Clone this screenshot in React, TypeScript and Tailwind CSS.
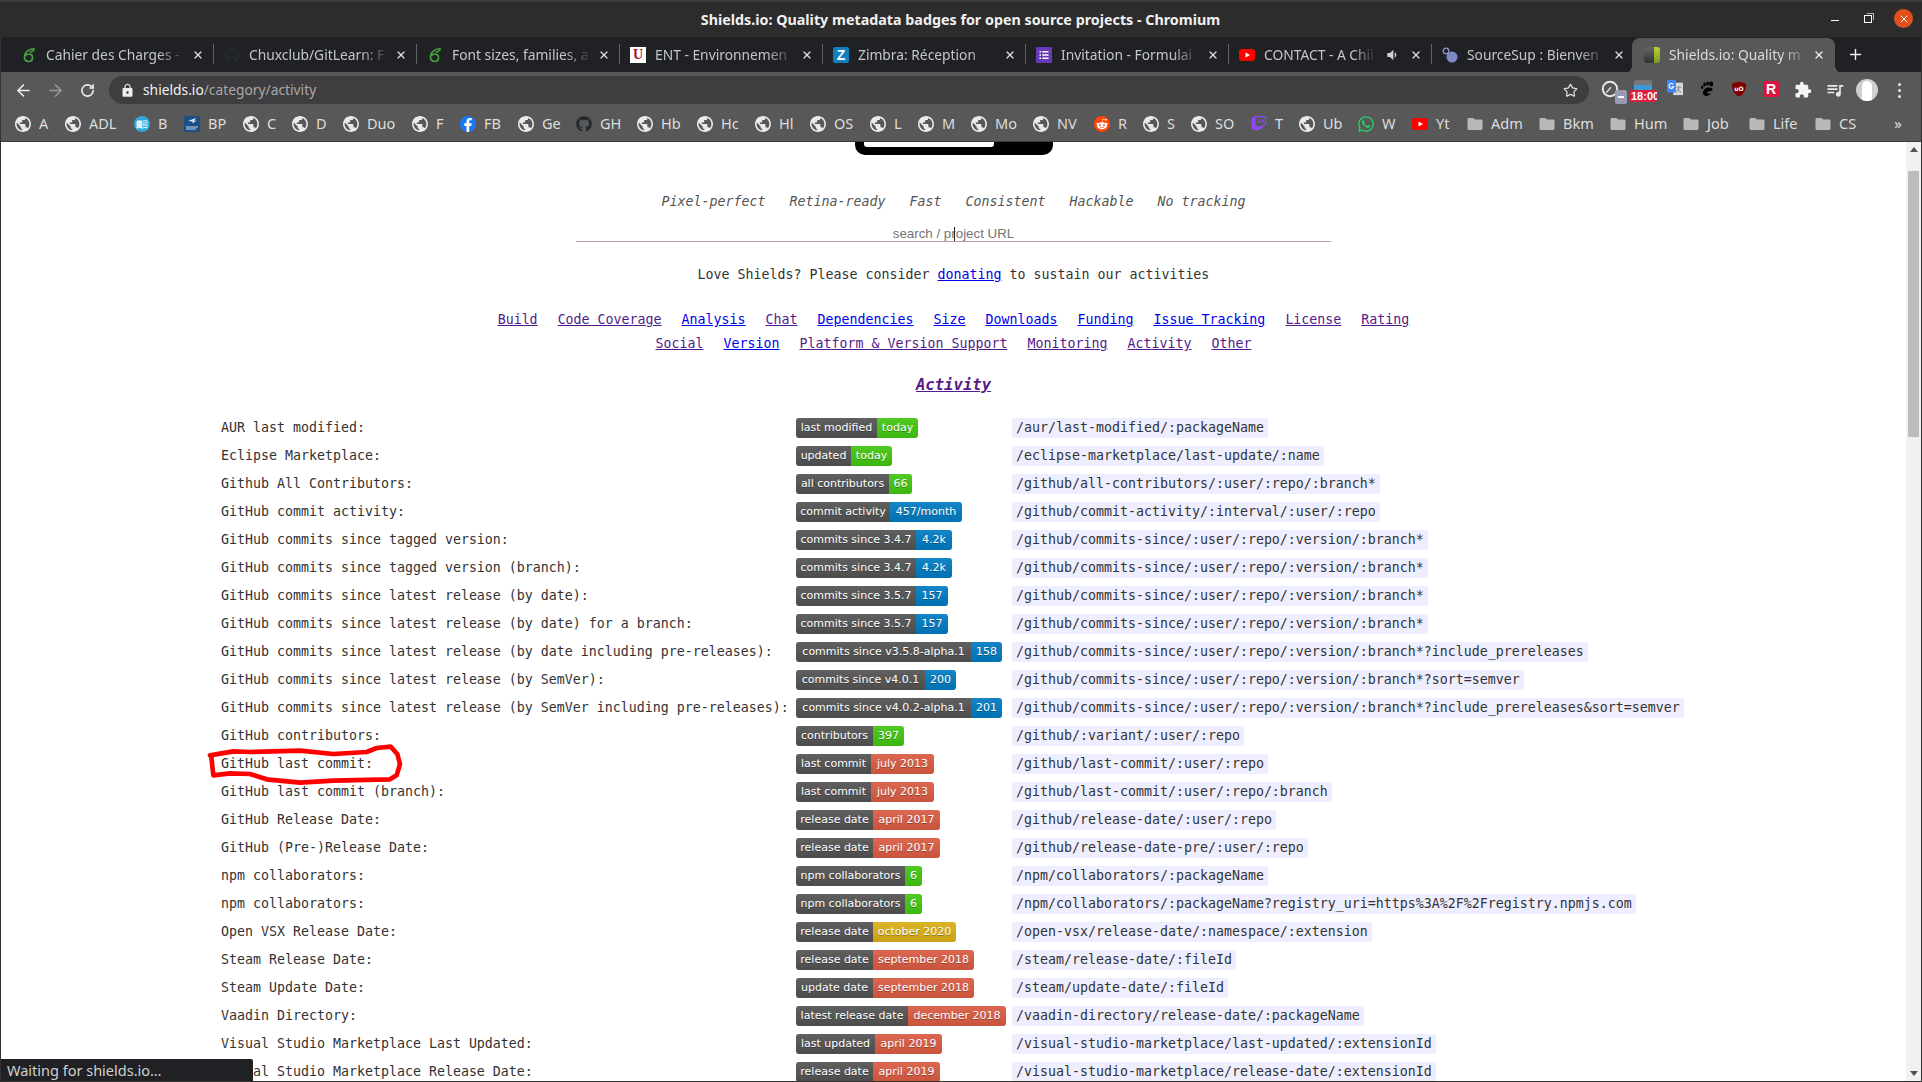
import React from 'react';
import { ArrowLeft, ArrowRight, RotateCw, Plus, X, Star } from 'lucide-react';
import { FaGithub, FaWhatsapp, FaTwitch, FaRedditAlien, FaFacebookF } from 'react-icons/fa';
import { MdLock, MdFolder, MdExtension, MdQueueMusic, MdVolumeDown, MdMenuBook } from 'react-icons/md';

const Globe = () => (
  <svg viewBox="2 2 20 20" className="w-4 h-4 shrink-0" fill="#e8eaed">
    <path d="M12 2C6.48 2 2 6.48 2 12s4.48 10 10 10 10-4.48 10-10S17.52 2 12 2zm-1 17.93c-3.95-.49-7-3.85-7-7.93 0-.62.08-1.21.21-1.79L9 15v1c0 1.1.9 2 2 2v1.93zm6.9-2.54c-.26-.81-1-1.39-1.9-1.39h-1v-3c0-.55-.45-1-1-1H8v-2h2c.55 0 1-.45 1-1V7h2c1.1 0 2-.9 2-2v-.41c2.93 1.19 5 4.06 5 7.41 0 2.08-.8 3.97-2.1 5.39z" />
  </svg>
);

const Overleaf = () => (
  <svg viewBox="0 0 16 16" className="w-4 h-4 shrink-0" fill="none" stroke="#47a141" strokeWidth="1.7">
    <path d="M13.5 1.5C9 2 4 4.500 3.500 9.500c-.3 3 1.500 5 4 5s4-1.800 4-4-1.800-3.500-3.700-3.500c-1.500 0-2.800.8-3.500 2" />
    <path d="M13.5 1.500c-.5 2-2 3.500-5 3.500" strokeWidth="1.300" />
  </svg>
);

const Ent = () => (
  <div className="w-4 h-4 shrink-0 bg-white flex items-center justify-center text-[#a3142a] text-[14px] font-bold leading-none [font-family:'Liberation_Serif',serif]">
    U
  </div>
);

const Zimbra = () => (
  <div className="w-4 h-4 shrink-0 rounded-[2px] bg-[#0f7fc0] flex items-center justify-center text-white text-[14px] font-bold leading-none [font-family:'Liberation_Sans',sans-serif]">
    Z
  </div>
);

const Forms = () => (
  <svg viewBox="0 0 16 16" className="w-4 h-4 shrink-0">
    <rect width="16" height="16" rx="1" fill="#673ab7" />
    <path d="M3.500 4h1.500v1.500H3.500zM3.500 7.300h1.500v1.500H3.500zM3.500 10.500h1.500V12H3.500zM6.300 4h6.200v1.500H6.300zM6.300 7.300h6.200v1.500H6.300zM6.300 10.500h6.200V12H6.300z" fill="#fff" />
  </svg>
);

const Youtube = () => (
  <svg viewBox="0 0 16 16" className="w-4 h-4 shrink-0">
    <rect y="2" width="16" height="12" rx="3" fill="#f00" />
    <path d="M6.500 5.500v5L11 8z" fill="#fff" />
  </svg>
);

const SourceSup = () => (
  <svg viewBox="0 0 16 16" className="w-4 h-4 shrink-0">
    <circle cx="4" cy="4" r="2.800" fill="none" stroke="#8e97cf" strokeWidth="1.300" />
    <circle cx="10" cy="10" r="5.500" fill="#8088c8" />
  </svg>
);

const ShieldsIcon = () => (
  <div className="w-4 h-4 shrink-0 rounded-[3px] flex overflow-hidden">
    <div className="w-[10px] bg-gradient-to-b from-[#666] to-[#333]" />
    <div className="flex-1 bg-gradient-to-b from-[#b5d334] to-[#7d9b1c]" />
  </div>
);

const GithubDark = () => <FaGithub className="w-4 h-4 shrink-0 text-[#24292e]" />;
const Folder = () => <MdFolder className="w-[18px] h-[18px] shrink-0 -mx-[1px] text-[#b9b9b9]" />;

const BookIcon = () => (
  <div className="w-4 h-4 shrink-0 rounded-full bg-[#30a8dc] flex items-center justify-center">
    <MdMenuBook className="w-3 h-3 text-[#d9f1fb]" />
  </div>
);

const BanquePostale = () => (
  <svg viewBox="0 0 16 16" className="w-4 h-4 shrink-0">
    <rect width="16" height="16" fill="#1b4f86" />
    <path d="M4 5l8-3-2 3 3-.5-5 3 1-2z" fill="#e8eef5" />
    <path d="M2 11h12M2 13h10" stroke="#c9d6e5" strokeWidth="1" />
  </svg>
);

const FacebookIcon = () => (
  <div className="w-4 h-4 shrink-0 rounded-full bg-[#1877f2] flex items-end justify-center overflow-hidden">
    <FaFacebookF className="w-3 h-[14px] text-white" />
  </div>
);

const RedditIcon = () => (
  <div className="w-4 h-4 shrink-0 rounded-full bg-[#ff4500] flex items-center justify-center">
    <FaRedditAlien className="w-3 h-3 text-white" />
  </div>
);

const bookmarks: { t: string; w: number; icon?: React.ReactNode }[] = [
  { t: 'A', w: 50 },
  { t: 'ADL', w: 69 },
  { t: 'B', w: 50, icon: <BookIcon /> },
  { t: 'BP', w: 59, icon: <BanquePostale /> },
  { t: 'C', w: 49 },
  { t: 'D', w: 51 },
  { t: 'Duo', w: 69 },
  { t: 'F', w: 48 },
  { t: 'FB', w: 58, icon: <FacebookIcon /> },
  { t: 'Ge', w: 58 },
  { t: 'GH', w: 61, icon: <GithubDark /> },
  { t: 'Hb', w: 60 },
  { t: 'Hc', w: 58 },
  { t: 'Hl', w: 55 },
  { t: 'OS', w: 60 },
  { t: 'L', w: 48 },
  { t: 'M', w: 53 },
  { t: 'Mo', w: 62 },
  { t: 'NV', w: 61 },
  { t: 'R', w: 49, icon: <RedditIcon /> },
  { t: 'S', w: 48 },
  { t: 'SO', w: 60 },
  { t: 'T', w: 48, icon: <FaTwitch className="w-4 h-4 shrink-0 text-[#9146ff]" /> },
  { t: 'Ub', w: 59 },
  { t: 'W', w: 54, icon: <FaWhatsapp className="w-[18px] h-[18px] -mx-[1px] shrink-0 text-[#25d366]" /> },
  { t: 'Yt', w: 55, icon: <Youtube /> },
  { t: 'Adm', w: 72, icon: <Folder /> },
  { t: 'Bkm', w: 71, icon: <Folder /> },
  { t: 'Hum', w: 73, icon: <Folder /> },
  { t: 'Job', w: 66, icon: <Folder /> },
  { t: 'Life', w: 66, icon: <Folder /> },
  { t: 'CS', w: 50, icon: <Folder /> },
];

const tabs: { t: string; icon: React.ReactNode; sound?: boolean }[] = [
  { t: 'Cahier des Charges -', icon: <Overleaf /> },
  { t: 'Chuxclub/GitLearn: F', icon: <GithubDark /> },
  { t: 'Font sizes, families, a', icon: <Overleaf /> },
  { t: 'ENT - Environnemen', icon: <Ent /> },
  { t: 'Zimbra: Réception', icon: <Zimbra /> },
  { t: 'Invitation - Formulai', icon: <Forms /> },
  { t: 'CONTACT - A Chil', icon: <Youtube />, sound: true },
  { t: 'SourceSup : Bienven', icon: <SourceSup /> },
];

const GREEN = 'bg-[#44cc11]';
const BLUE = 'bg-[#007ec6]';
const RED = 'bg-[#e05d44]';
const YELLOW = 'bg-[#dfb317]';

const rows: [string, string, number, string, number, string, string][] = [
  ['AUR last modified:', 'last modified', 81, 'today', 41, GREEN, '/aur/last-modified/:packageName'],
  ['Eclipse Marketplace:', 'updated', 55, 'today', 41, GREEN, '/eclipse-marketplace/last-update/:name'],
  ['Github All Contributors:', 'all contributors', 93, '66', 23, GREEN, '/github/all-contributors/:user/:repo/:branch*'],
  ['GitHub commit activity:', 'commit activity', 94, '457/month', 72, BLUE, '/github/commit-activity/:interval/:user/:repo'],
  ['GitHub commits since tagged version:', 'commits since 3.4.7', 120, '4.2k', 36, BLUE, '/github/commits-since/:user/:repo/:version/:branch*'],
  ['GitHub commits since tagged version (branch):', 'commits since 3.4.7', 120, '4.2k', 36, BLUE, '/github/commits-since/:user/:repo/:version/:branch*'],
  ['GitHub commits since latest release (by date):', 'commits since 3.5.7', 120, '157', 32, BLUE, '/github/commits-since/:user/:repo/:version/:branch*'],
  ['GitHub commits since latest release (by date) for a branch:', 'commits since 3.5.7', 120, '157', 32, BLUE, '/github/commits-since/:user/:repo/:version/:branch*'],
  ['GitHub commits since latest release (by date including pre-releases):', 'commits since v3.5.8-alpha.1', 175, '158', 31, BLUE, '/github/commits-since/:user/:repo/:version/:branch*?include_prereleases'],
  ['GitHub commits since latest release (by SemVer):', 'commits since v4.0.1', 129, '200', 31, BLUE, '/github/commits-since/:user/:repo/:version/:branch*?sort=semver'],
  ['GitHub commits since latest release (by SemVer including pre-releases):', 'commits since v4.0.2-alpha.1', 175, '201', 31, BLUE, '/github/commits-since/:user/:repo/:version/:branch*?include_prereleases&sort=semver'],
  ['GitHub contributors:', 'contributors', 77, '397', 31, GREEN, '/github/:variant/:user/:repo'],
  ['GitHub last commit:', 'last commit', 75, 'july 2013', 63, RED, '/github/last-commit/:user/:repo'],
  ['GitHub last commit (branch):', 'last commit', 75, 'july 2013', 63, RED, '/github/last-commit/:user/:repo/:branch'],
  ['GitHub Release Date:', 'release date', 77, 'april 2017', 67, RED, '/github/release-date/:user/:repo'],
  ['GitHub (Pre-)Release Date:', 'release date', 77, 'april 2017', 67, RED, '/github/release-date-pre/:user/:repo'],
  ['npm collaborators:', 'npm collaborators', 109, '6', 17, GREEN, '/npm/collaborators/:packageName'],
  ['npm collaborators:', 'npm collaborators', 109, '6', 17, GREEN, '/npm/collaborators/:packageName?registry_uri=https%3A%2F%2Fregistry.npmjs.com'],
  ['Open VSX Release Date:', 'release date', 77, 'october 2020', 83, YELLOW, '/open-vsx/release-date/:namespace/:extension'],
  ['Steam Release Date:', 'release date', 77, 'september 2018', 101, RED, '/steam/release-date/:fileId'],
  ['Steam Update Date:', 'update date', 77, 'september 2018', 101, RED, '/steam/update-date/:fileId'],
  ['Vaadin Directory:', 'latest release date', 112, 'december 2018', 98, RED, '/vaadin-directory/release-date/:packageName'],
  ['Visual Studio Marketplace Last Updated:', 'last updated', 79, 'april 2019', 67, RED, '/visual-studio-marketplace/last-updated/:extensionId'],
  ['Visual Studio Marketplace Release Date:', 'release date', 77, 'april 2019', 67, RED, '/visual-studio-marketplace/release-date/:extensionId'],
];

const navRows: [string, boolean][][] = [
  [['Build', true], ['Code Coverage', true], ['Analysis', false], ['Chat', true], ['Dependencies', false], ['Size', false], ['Downloads', false], ['Funding', false], ['Issue Tracking', false], ['License', true], ['Rating', true]],
  [['Social', true], ['Version', false], ['Platform & Version Support', true], ['Monitoring', true], ['Activity', true], ['Other', true]],
];

const segment = "h-full flex items-center justify-center bg-[linear-gradient(rgba(187,187,187,0.1),rgba(0,0,0,0.1))] [text-shadow:0_1px_0_rgba(1,1,1,0.3)]";

const Badge = ({ label, lw, value, vw, color }: { label: string; lw: number; value: string; vw: number; color: string }) => (
  <div className="h-5 flex rounded-[3px] overflow-hidden text-white text-[11px] whitespace-nowrap [font-family:'DejaVu_Sans',sans-serif]">
    <span className={`${segment} bg-[#555555]`} style={{ width: lw }}>{label}</span>
    <span className={`${segment} ${color}`} style={{ width: vw }}>{value}</span>
  </div>
);

const Extensions = () => (
  <div className="flex items-center">
    {/* page speed */}
    <div className="relative w-8 h-7 flex items-center justify-center">
      <svg viewBox="0 0 20 20" className="w-[18px] h-[18px] -translate-x-[1px] -translate-y-[1px]" fill="none" stroke="#e8eaed" strokeWidth="2.200">
        <circle cx="10" cy="10" r="8" />
        <path d="M6 14l5-6" strokeWidth="1.500" />
      </svg>
      <div className="absolute left-[20px] top-[14px] w-[12px] h-[14px] rounded-[2px] bg-[#9a9ab2] flex items-center justify-center">
        <div className="w-[6px] h-[2px] bg-white" />
      </div>
    </div>
    {/* calendar with time badge */}
    <div className="relative w-8 h-7">
      <div className="absolute left-[7px] top-[4px] w-[18px] h-[13px] rounded-[2px] bg-[#777] overflow-hidden">
        <div className="mt-[5px] h-[8px] bg-[#3a9ad9]" />
      </div>
      <div className="absolute left-[2px] top-[14px] w-[28px] h-[12px] rounded-[2px] bg-[#dc1f3c] text-white text-[11px] font-bold leading-[12px] overflow-hidden whitespace-nowrap pl-[2px] [font-family:'Liberation_Sans',sans-serif]">
        18:00
      </div>
    </div>
    {/* translate */}
    <div className="w-8 h-7 flex items-center justify-center">
      <svg viewBox="0 0 18 18" className="w-4 h-4 -translate-y-[2px]">
        <rect x="7" y="3" width="11" height="14" fill="#d5d9de" />
        <path d="M11 8h5M13.500 8c0 3-2 5-3 6M12 10c1 2 3 4 4 4" stroke="#777" fill="none" strokeWidth="1" />
        <rect width="10" height="14" rx="1" fill="#4285f4" />
        <path d="M7 5a2.700 2.700 0 1 0 .5 2.500H5" stroke="#fff" fill="none" strokeWidth="1.200" />
      </svg>
    </div>
    {/* gnome foot */}
    <div className="w-8 h-7 flex items-center justify-center">
      <svg viewBox="0 0 16 16" className="w-4 h-4 -translate-y-[1px]" fill="#000">
        <ellipse cx="3.200" cy="6.200" rx="1.100" ry="1.700" />
        <ellipse cx="5.600" cy="3.600" rx="1.300" ry="2" />
        <ellipse cx="8.600" cy="2.600" rx="1.400" ry="2" />
        <ellipse cx="12.200" cy="2.900" rx="2" ry="2.300" />
        <path d="M4 12c0-3.500 3-5.500 6-5.500 2.500 0 4 1 3.500 2.500-.5 1.500-3 1-4.500 1.500-1.500.5-1 2 .5 2 1 0 2-.5 2-.5-.5 2-2.500 3-4 3-2 0-3.500-1-3.500-3z" />
      </svg>
    </div>
    {/* ublock */}
    <div className="w-8 h-7 flex items-center justify-center">
      <svg viewBox="0 0 16 16" className="w-4 h-4 -translate-y-[1px]">
        <path d="M8 .5L15 2.500c0 6-1.500 10.500-7 13C2.500 13 1 8.500 1 2.500z" fill="#800000" />
        <text x="8" y="10" textAnchor="middle" fontSize="6" fontWeight="700" fill="#fff" fontFamily="DejaVu Sans">uO</text>
      </svg>
    </div>
    {/* red R */}
    <div className="w-8 h-7 flex items-center justify-center">
      <div className="w-4 h-4 -translate-y-[1px] rounded-[2px] bg-[#dc143c] text-white text-[14px] font-bold leading-4 text-center [font-family:'Liberation_Sans',sans-serif]">R</div>
    </div>
    <div className="w-8 h-7 flex items-center justify-center">
      <MdExtension className="w-[18px] h-[18px] text-[#f1f3f4]" />
    </div>
    <div className="w-8 h-7 flex items-center justify-center">
      <MdQueueMusic className="w-5 h-5 text-[#e8eaed]" />
    </div>
    {/* avatar */}
    <div className="w-8 h-7 flex items-center justify-center">
      <div className="w-[22px] h-[22px] rounded-full bg-[#cfcfcf] flex justify-center overflow-hidden">
        <div className="w-[10px] h-[20px] mt-[2px] rounded-t-full bg-white" />
      </div>
    </div>
    <div className="w-8 h-7 flex flex-col items-center justify-center gap-[3px]">
      <div className="w-[3px] h-[3px] rounded-full bg-[#e8eaed]" />
      <div className="w-[3px] h-[3px] rounded-full bg-[#e8eaed]" />
      <div className="w-[3px] h-[3px] rounded-full bg-[#e8eaed]" />
    </div>
  </div>
);

export default function App() {
  return (
    <div className="relative w-[1922px] h-[1082px] flex flex-col overflow-hidden bg-white [font-family:'Noto_Sans',sans-serif]">
      {/* title bar */}
      <div className="relative h-[37px] shrink-0 bg-[#2c2c2c] border-t-2 border-[#3a3a3a] flex items-center justify-center">
        <span className="text-[14.3px] font-bold text-[#f0f0f0] ml-[-1px]">
          Shields.io: Quality metadata badges for open source projects - Chromium
        </span>
        <div className="absolute right-[9px] top-[7px] flex items-center">
          <div className="w-[8px] h-[1.5px] bg-white mr-[25px] mt-[4px]" />
          <div className="relative w-[8px] h-[8px] border border-white mr-[22px]">
            <div className="absolute -top-[3px] -right-[3px] w-[7px] h-[7px] border-t border-r border-[#bbb]" />
          </div>
          <div className="w-[19px] h-[19px] rounded-full bg-[#e2501e] flex items-center justify-center">
            <X className="w-3 h-3 text-white" strokeWidth={2} />
          </div>
        </div>
      </div>

      {/* tab strip */}
      <div className="h-[35px] shrink-0 bg-[#202124] flex items-center pl-[10px] border-x border-[#333]">
        {tabs.map(tab => (
          <div key={tab.t} className="relative w-[203px] h-full flex items-center pl-[10px] text-[13.8px] text-[#c4c7ca]">
            {tab.icon}
            <span className={`ml-[9px] pt-[2px] overflow-hidden whitespace-nowrap [mask-image:linear-gradient(to_right,black_80%,transparent)] ${tab.sound ? 'w-[112px]' : 'w-[140px]'}`}>
              {tab.t}
            </span>
            {tab.sound && <MdVolumeDown className="absolute left-[155px] w-4 h-4 text-[#d0d0d0]" />}
            <X className="absolute left-[181px] w-3 h-3 text-[#e0e0e0]" strokeWidth={2.5} />
            <div className="absolute right-0 top-[7px] w-px h-[20px] bg-[#5f6368]" />
          </div>
        ))}
        <div className="relative w-[203px] h-full -ml-[3px] mt-[1px] flex items-center pl-[12px] rounded-t-lg bg-[#585858] text-[13.8px] text-[#dcdcdc]">
          <div className="absolute -left-2 bottom-0 w-2 h-2 bg-[radial-gradient(circle_at_0_0,transparent_8px,#585858_8px)]" />
          <div className="absolute -right-2 bottom-0 w-2 h-2 bg-[radial-gradient(circle_at_100%_0,transparent_8px,#585858_8px)]" />
          <ShieldsIcon />
          <span className="ml-[9px] pt-[1px] w-[140px] overflow-hidden whitespace-nowrap [mask-image:linear-gradient(to_right,black_80%,transparent)]">
            Shields.io: Quality m
          </span>
          <X className="absolute left-[181px] w-3 h-3 text-[#f0f0f0]" strokeWidth={2.5} />
        </div>
        <Plus className="ml-[12px] w-[17px] h-[17px] text-[#f0f0f0]" strokeWidth={2} />
      </div>

      {/* toolbar */}
      <div className="h-[34px] shrink-0 bg-[#585858] border-x border-[#333] flex items-center pl-[6px] pr-[6px] pt-[2px]">
        <div className="w-8 flex justify-center"><ArrowLeft className="w-[19px] h-[19px] text-[#eee]" strokeWidth={2} /></div>
        <div className="w-8 flex justify-center"><ArrowRight className="w-[19px] h-[19px] text-[#9a9a9a]" strokeWidth={2} /></div>
        <div className="w-8 flex justify-center"><RotateCw className="w-[15px] h-[15px] text-[#eee]" strokeWidth={2.5} /></div>
        <div className="ml-[6px] w-[1480px] h-7 rounded-full bg-[#3f3d40] flex items-center pl-[11px] pr-[11px] text-[13.8px]">
          <MdLock className="w-[15px] h-[15px] text-[#eee]" />
          <span className="ml-[8px] text-[#f1f1f1]">shields.io</span>
          <span className="text-[#a9a9ab]">/category/activity</span>
          <Star className="ml-auto w-[15px] h-[15px] text-[#ddd]" strokeWidth={2} />
        </div>
        <div className="ml-[6px]"><Extensions /></div>
      </div>

      {/* bookmarks */}
      <div className="relative h-[36px] shrink-0 bg-[#585858] border-x border-[#333] border-b border-b-[#3a3a3a] flex items-center pl-[14px] text-[14.5px] text-[#dedede]">
        {bookmarks.map(b => (
          <div key={b.t} className="flex items-center gap-2 shrink-0" style={{ width: b.w }}>
            {b.icon ?? <Globe />}
            <span>{b.t}</span>
          </div>
        ))}
        <span className="absolute right-[19px] text-[15px] text-[#e0e0e0]">»</span>
      </div>

      {/* page */}
      <div className="relative flex-1 min-h-0 flex border-x border-b border-[#333]">
        <main className="flex-1 min-w-0 overflow-hidden text-[13.29px] text-[#333] [font-family:'DejaVu_Sans_Mono',monospace]">
          <div className="mx-auto w-[198px] h-[13px] bg-black rounded-b-[10px] pl-[9px]">
            <div className="w-[130px] h-[5px] bg-white rounded-b-[3px]" />
          </div>

          <div className="mt-[37px] h-5 flex justify-center gap-x-6 italic text-[#555] leading-5">
            {['Pixel-perfect', 'Retina-ready', 'Fast', 'Consistent', 'Hackable', 'No tracking'].map(t => (
              <span key={t}>{t}</span>
            ))}
          </div>

          <div className="relative mt-[12px] mx-auto w-[755px] h-[18px] border-b border-[#c29aa6] text-center leading-[20px] text-[13.33px] text-[#757575] [font-family:'Liberation_Sans',sans-serif]">
            search / project URL
            <div className="absolute left-[378px] top-[3px] w-px h-[14px] bg-[#222]" />
          </div>

          <p className="mt-[23px] h-5 leading-5 text-center">
            Love Shields? Please consider <a className="underline text-[#0000ee]">donating</a> to sustain our activities
          </p>

          <nav className="mt-[23px]">
            {navRows.map((links, i) => (
              <div key={i} className="h-6 leading-6 flex justify-center gap-x-5">
                {links.map(([t, visited]) => (
                  <a key={t} className={visited ? 'underline text-[#551a8b]' : 'underline text-[#0000ee]'}>{t}</a>
                ))}
              </div>
            ))}
          </nav>

          <h3 className="mt-[19px] h-5 leading-5 text-center text-[15.6px] font-bold italic underline text-[#551a8b]">Activity</h3>

          <div className="mt-[19px] pl-[220px]">
            {rows.map(([name, label, lw, value, vw, color, code], i) => (
              <div key={i} className="h-7 flex items-center whitespace-nowrap">
                <div className="relative w-[575px] shrink-0">
                  {name}
                  {i === 12 && (
                    <svg viewBox="0 0 660 210" className="absolute -left-[21px] -top-[14px] w-[220px] h-[70px]" fill="none" stroke="#f00" strokeWidth="14" strokeLinejoin="round">
                      <path d="M30 46L100 34 150 36 300 32 400 42 500 36 530 24 572 20 592 42 600 72 590 106 570 118 400 122 300 128 200 118 150 102 90 100 40 106 34 50z" />
                    </svg>
                  )}
                </div>
                <div className="w-[216px] shrink-0">
                  <div className="w-fit"><Badge label={label} lw={lw} value={value} vw={vw} color={color} /></div>
                </div>
                <code className="h-5 leading-5 px-1 rounded-[3px] bg-[#eeeeff] [font-family:'DejaVu_Sans_Mono',monospace]">{code}</code>
              </div>
            ))}
          </div>
        </main>

        {/* scrollbar */}
        <div className="relative w-[15px] shrink-0 bg-[#f1f1f1] flex flex-col items-center">
          <div className="mt-[5px] w-0 h-0 border-x-[4px] border-x-transparent border-b-[5px] border-b-[#505050]" />
          <div className="mt-[19px] w-[11px] h-[266px] bg-[#bcbcbc]" />
          <div className="mt-auto mb-[5px] w-0 h-0 border-x-[4px] border-x-transparent border-t-[5px] border-t-[#505050]" />
        </div>

        {/* status bubble */}
        <div className="absolute left-0 bottom-0 w-[252px] h-[22px] rounded-tr-[2px] bg-[#202124] pl-[6px] text-[14.5px] leading-[22px] text-[#d0d0d0]">
          Waiting for shields.io…
        </div>
      </div>
    </div>
  );
}
